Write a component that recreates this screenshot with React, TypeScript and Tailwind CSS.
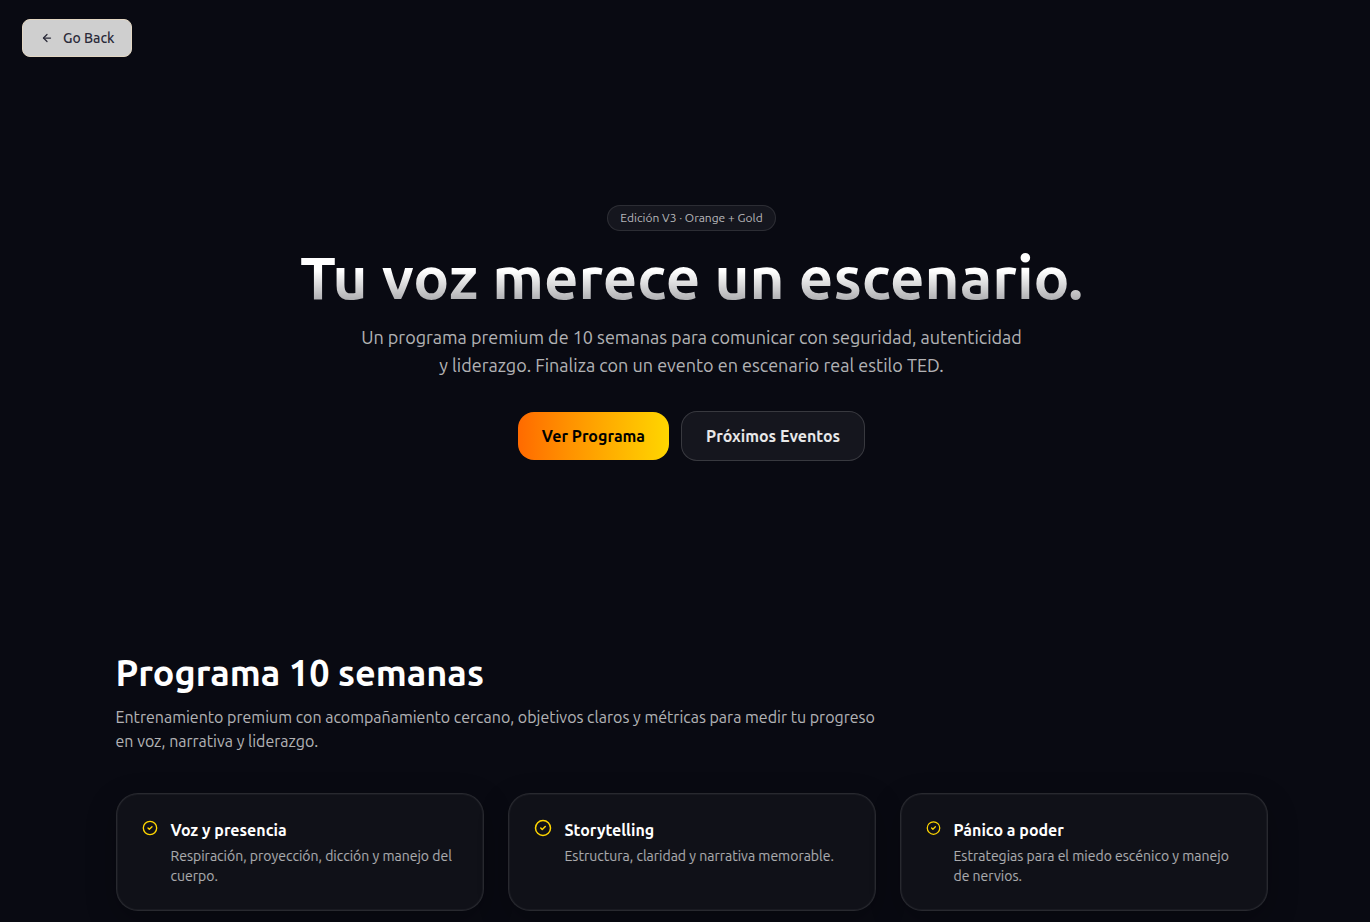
import { ArrowLeft, CircleCheck } from "lucide-react";

const modules = [
  {
    title: "Voz y presencia",
    text: "Respiración, proyección, dicción y manejo del cuerpo.",
    icon: "w-[16px]",
  },
  {
    title: "Storytelling",
    text: "Estructura, claridad y narrativa memorable.",
    icon: "w-[18px]",
  },
  {
    title: "Pánico a poder",
    text: "Estrategias para el miedo escénico y manejo de nervios.",
    icon: "w-[15px]",
  },
];

export default function App() {
  return (
    <div className="relative min-h-screen overflow-hidden bg-[#090a12] pl-[13px] font-['Ubuntu','Open_Sans',sans-serif] text-white">
      <button
        type="button"
        className="absolute top-[19px] left-[22px] flex h-[38px] w-[110px] items-center gap-[10px] rounded-lg border border-[#e2d6c2] bg-[#cfcfcf] pl-[18px] text-sm font-medium text-[#2b2b3a]"
      >
        <ArrowLeft className="size-3" strokeWidth={2.5} />
        Go Back
      </button>

      <main>
        <section className="flex flex-col items-center px-6 pt-[205px] pb-48 text-center">
          <span className="flex h-[26px] items-center rounded-full border border-white/10 bg-white/5 px-3 text-xs text-white/70">
            Edición V3 · Orange + Gold
          </span>
          <h1 className="mt-4 bg-linear-to-b from-white from-40% to-white/60 bg-clip-text text-[60px] leading-[60px] font-semibold text-transparent">
            Tu voz merece un escenario.
          </h1>
          <p className="mt-4 max-w-2xl text-lg leading-7 text-white/70">
            Un programa premium de 10 semanas para comunicar con seguridad, autenticidad
            <br />y liderazgo. Finaliza con un evento en escenario real estilo TED.
          </p>
          <div className="mt-8 flex items-center gap-3">
            <a
              href="#programa"
              className="flex h-12 items-center rounded-2xl bg-linear-to-r from-[#ff6a00] to-[#ffd600] px-6 font-semibold text-black"
            >
              Ver Programa
            </a>
            <a
              href="#eventos"
              className="flex h-[50px] items-center rounded-2xl border border-white/15 bg-white/5 px-6 font-semibold text-white/90"
            >
              Próximos Eventos
            </a>
          </div>
        </section>

        <section id="programa" className="mx-auto max-w-6xl pb-24">
          <h2 className="text-4xl leading-10 font-semibold">Programa 10 semanas</h2>
          <p className="mt-3 max-w-3xl leading-6 text-white/70">
            Entrenamiento premium con acompañamiento cercano, objetivos claros y métricas para medir tu progreso
            <br />
            en voz, narrativa y liderazgo.
          </p>
          <div className="mt-10 grid grid-cols-3 gap-6">
            {modules.map((m) => (
              <article
                key={m.title}
                className="flex gap-[13px] rounded-[22px] border border-white/10 bg-[#101118] py-6 pr-6 pl-[25px] shadow-[0_10px_30px_rgba(0,0,0,0.25),inset_0_0_0_1px_rgba(255,255,255,0.04)]"
              >
                <CircleCheck className={`h-5 shrink-0 text-[#ffd600] ${m.icon}`} strokeWidth={2} />
                <div>
                  <h3 className="leading-6 font-semibold">{m.title}</h3>
                  <p className="mt-1 text-sm leading-5 text-white/65">{m.text}</p>
                </div>
              </article>
            ))}
          </div>
        </section>
      </main>
    </div>
  );
}
